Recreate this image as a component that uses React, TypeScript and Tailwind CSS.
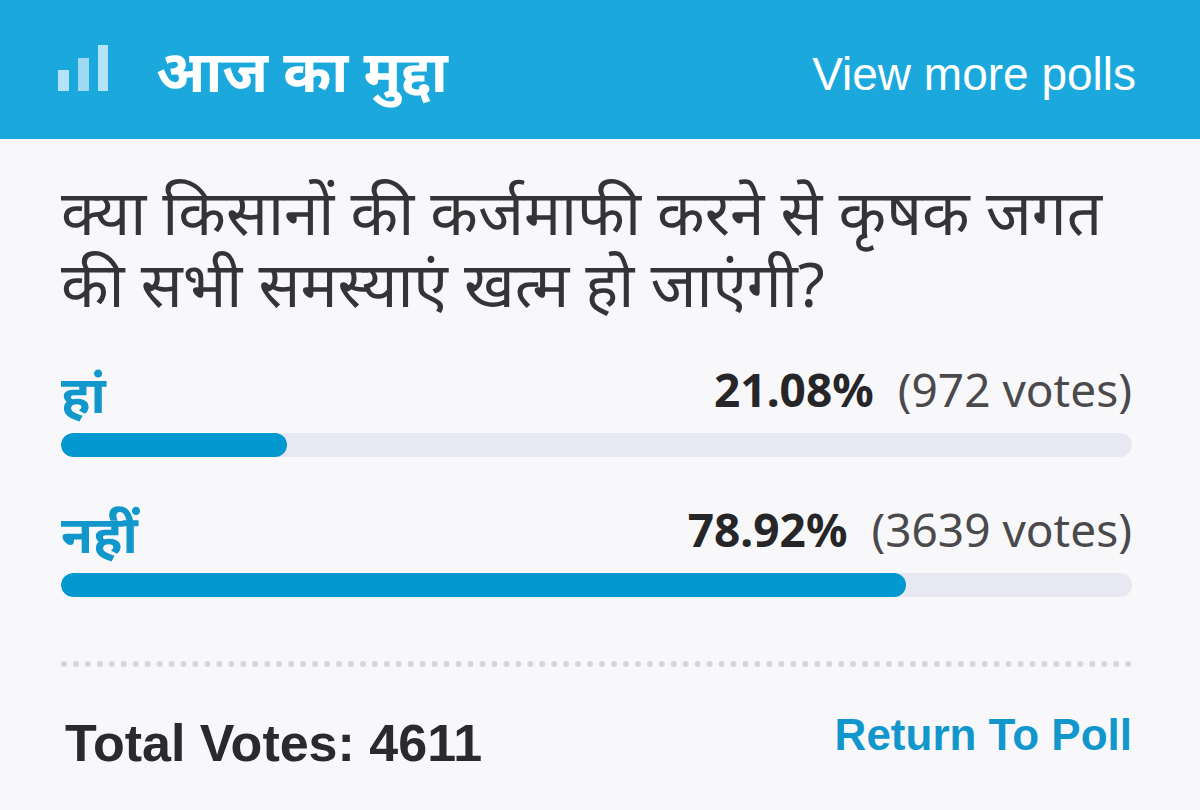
const options = [
    { id: "yes", label: "हां", percent: 21.08, votes: 972 },
    { id: "no", label: "नहीं", percent: 78.92, votes: 3639 },
];

const totalVotes = options.reduce((sum, option) => sum + option.votes, 0);

function PollIcon() {
    return (
        <svg width="50" height="49" viewBox="0 0 50 49" fill="#b3e3f6" className="shrink-0" aria-hidden="true">
            <rect x="0" y="25" width="11" height="21" />
            <rect x="20" y="13" width="11" height="33" fill="#9fdaf2" />
            <rect x="40" y="0" width="10" height="46" />
        </svg>
    );
}

function PollOption({ id, label, percent, votes }: (typeof options)[number]) {
    return (
        <li>
            <div className="flex h-17 items-start justify-between">
                <span id={id} className="text-[52px] leading-14 font-bold text-[#1197cb]">
                    {label}
                </span>
                <span className="text-[46px] leading-12 text-[#4a4a4c]">
                    <strong className="mr-6 font-bold text-[#262628]">{percent}%</strong>
                    ({votes} votes)
                </span>
            </div>
            <div
                role="progressbar"
                aria-labelledby={id}
                aria-valuenow={percent}
                className="h-6 overflow-hidden rounded-full bg-[#e8e8f2]"
            >
                <div className="h-full rounded-full bg-[#0398cf]" style={{ width: `${percent}%` }} />
            </div>
        </li>
    );
}

export default function App() {
    return (
        <div className="min-h-screen bg-[#f8f8fb] font-['Noto_Sans',sans-serif]">
            <header className="flex h-[139px] items-center bg-[#1ba8dd] pr-16 pl-[58px] text-white">
                <PollIcon />
                <h1 className="ml-12 text-[58px] leading-16 font-bold">आज का मुद्दा</h1>
                <a href="#polls" className="mt-2 ml-auto font-['Liberation_Sans',sans-serif] text-[46px] leading-12">
                    View more polls
                </a>
            </header>
            <main className="pr-[68px] pl-[61px]">
                <h2 className="pt-9 text-[62px] leading-[72px] text-[#343436]">
                    क्या किसानों की कर्जमाफी करने से कृषक जगत की सभी समस्याएं खत्म हो जाएंगी?
                </h2>
                <ul className="mt-[46px] space-y-12">
                    {options.map((option) => (
                        <PollOption key={option.id} {...option} />
                    ))}
                </ul>
                <footer className="mt-16 flex items-start justify-between border-t-6 border-dotted border-[#d6d6da] pt-11 font-['Liberation_Sans',sans-serif] font-bold">
                    <p className="pl-1 text-[52px] leading-16 text-[#2a2a2c]">Total Votes: {totalVotes}</p>
                    <a href="#poll" className="text-[44px] leading-12 text-[#1197cb]">
                        Return To Poll
                    </a>
                </footer>
            </main>
        </div>
    );
}
